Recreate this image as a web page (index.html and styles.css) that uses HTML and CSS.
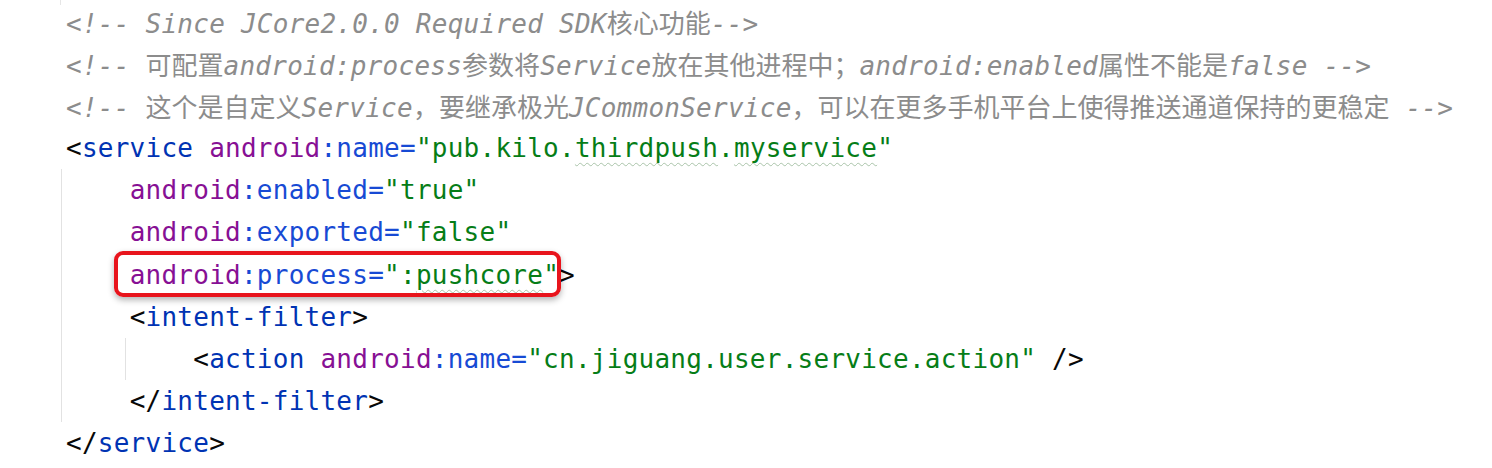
FILE: index.html
```html
<!DOCTYPE html>
<html lang="zh-CN">
<head>
<meta charset="utf-8">
<title>AndroidManifest service</title>
<link rel="stylesheet" href="styles.css">
</head>
<body>
<div class="code">
  <div class="ln cm">&lt;!-- Since JCore2.0.0 Required SDK<span class="cn">核心功能</span>--&gt;</div>
  <div class="ln cm">&lt;!-- <span class="cn">可配置</span>android:process<span class="cn">参数将</span>Service<span class="cn">放在其他进程中；</span>android:enabled<span class="cn">属性不能是</span>false --&gt;</div>
  <div class="ln cm">&lt;!-- <span class="cn">这个是自定义</span>Service<span class="cn">，要继承极光</span>JCommonService<span class="cn">，可以在更多手机平台上使得推送通道保持的更稳定</span> --&gt;</div>
  <div class="ln"><span class="br">&lt;</span><span class="tg">service</span> <span class="ns">android</span><span class="at">:name=</span><span class="vl">"pub.kilo.<span class="typo">thirdpush</span>.<span class="typo">myservice</span>"</span></div>
  <div class="children">
    <div class="ln">    <span class="ns">android</span><span class="at">:enabled=</span><span class="vl">"true"</span></div>
    <div class="ln">    <span class="ns">android</span><span class="at">:exported=</span><span class="vl">"false"</span></div>
    <div class="ln">    <span class="hl"><span class="ns">android</span><span class="at">:process=</span><span class="vl">":<span class="typo">pushcore</span>"</span></span><span class="br">&gt;</span></div>
    <div class="ln">    <span class="br">&lt;</span><span class="tg">intent-filter</span><span class="br">&gt;</span></div>
    <div class="inner">
      <div class="ln">        <span class="br">&lt;</span><span class="tg">action</span> <span class="ns">android</span><span class="at">:name=</span><span class="vl">"cn.jiguang.user.service.action"</span> <span class="br">/&gt;</span></div>
    </div>
    <div class="ln">    <span class="br">&lt;/</span><span class="tg">intent-filter</span><span class="br">&gt;</span></div>
  </div>
  <div class="ln"><span class="br">&lt;/</span><span class="tg">service</span><span class="br">&gt;</span></div>
</div>
</body>
</html>
```
FILE: styles.css
```css
html, body {
  margin: 0;
  padding: 0;
  background: #ffffff;
}

.code {
  position: relative;
  padding: 1px 0 0 66px;
  font-family: "DejaVu Sans Mono", "Noto Sans CJK SC", monospace;
  font-size: 26px;
  letter-spacing: 0.25px;
  line-height: 42.1px;
  color: #080808;
}

.code::before {
  content: "";
  position: absolute;
  left: 60px;
  top: 0;
  width: 1px;
  height: 5px;
  background: #e6e6e6;
}

.ln {
  white-space: pre;
  height: 42.1px;
}

.cm {
  color: #8c8c8c;
  font-style: italic;
}

.cn {
  font-family: "Noto Sans CJK SC", sans-serif;
  font-style: normal;
  letter-spacing: 0;
}

.br { color: #080808; }
.tg { color: #0033b3; }
.ns { color: #871094; }
.at { color: #174ad4; }
.vl { color: #067d17; }

.typo {
  text-decoration: underline wavy #a9c3a9;
  text-decoration-thickness: 1px;
  text-underline-offset: 5px;
}

.children {
  margin-left: -5px;
  padding-left: 4px;
  border-left: 1px solid #e2e2e2;
}

.inner {
  background: linear-gradient(#e2e2e2, #e2e2e2) no-repeat 59px 0 / 1px 100%;
}

.hl {
  position: relative;
  display: inline-block;
  height: 42.1px;
}

.hl::after {
  content: "";
  position: absolute;
  left: -16px;
  right: -2px;
  top: -3px;
  bottom: -1px;
  border: 4px solid #e8141c;
  border-radius: 9px;
  box-shadow: 0 3px 6px rgba(0, 0, 0, 0.3);
  pointer-events: none;
}
```
